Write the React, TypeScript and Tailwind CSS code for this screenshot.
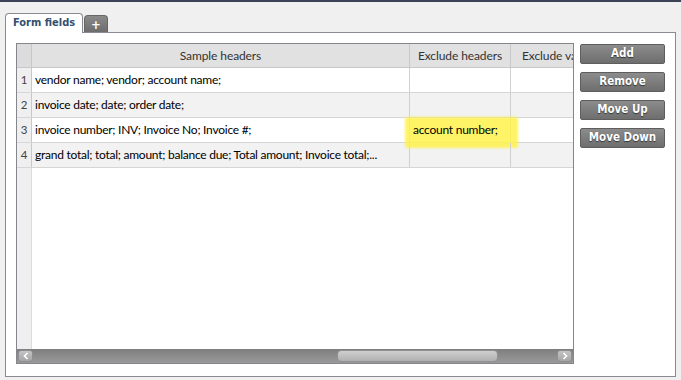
import React from "react";

const rows = [
  { n: 1, a: "vendor name; vendor; account name;", b: "" },
  { n: 2, a: "invoice date; date; order date;", b: "" },
  { n: 3, a: "invoice number; INV; Invoice No; Invoice #;", b: "account number;" },
  { n: 4, a: "grand total; total; amount; balance due; Total amount; Invoice total;...", b: "" },
];

const cellFont = { fontFamily: 'Lato, "Open Sans", sans-serif' };
const btnFont = { fontFamily: '"DejaVu Sans Condensed", "DejaVu Sans", sans-serif' };

function Btn({ label }: { label: string }) {
  return (
    <div
      className="w-[85px] h-[20px] rounded-[2px] border border-[#5e5e5e] bg-gradient-to-b from-[#8c8c8c] to-[#6e6e6e] flex items-center justify-center text-white font-bold text-[11.5px] [text-shadow:0_1px_1px_#333]"
      style={btnFont}
    >
      {label}
    </div>
  );
}

export default function App() {
  return (
    <div className="w-[681px] h-[380px] bg-[#f0f0f0] border-t-[2px] border-[#3d4356] flex flex-col overflow-hidden">
      <div className="flex items-end pl-[5px] pt-[10px]">
        <div
          className="h-[20px] w-[78px] bg-white border border-b-0 border-[#8a8a92] rounded-t-[4px] flex items-center pl-[7px] text-[11px] font-bold text-[#34506f] relative top-[1px]"
          style={btnFont}
        >
          Form fields
        </div>
        <div className="h-[17px] w-[24px] ml-[1px] bg-gradient-to-b from-[#8a8a8a] to-[#6d6d6d] border border-[#666] border-b-0 rounded-t-[4px] flex items-center justify-center text-white text-[13px] font-bold leading-none" style={btnFont}>
          +
        </div>
      </div>
      <div className="mx-[5px] h-[345px] bg-white border border-[#8a8a92] flex pl-[10px] pt-[10px] pr-[11px]">
        <div className="w-[558px] h-[321px] border border-[#85858c] flex flex-col relative" style={cellFont}>
          {/* header */}
          <div className="flex h-[24px] shrink-0 bg-[#e1e1e1] border-b border-[#c8c8c8] text-[12px] tracking-[-0.1px] text-[#333]">
            <div className="w-[15px] border-r border-[#c8c8c8] bg-[#dcdcdc]" />
            <div className="w-[378px] border-r border-[#c8c8c8] flex items-center justify-center">Sample headers</div>
            <div className="w-[101px] border-r border-[#c8c8c8] flex items-center justify-center">Exclude headers</div>
            <div className="flex-1 flex items-center pl-[11px] overflow-hidden whitespace-nowrap">Exclude values</div>
          </div>
          {rows.map((r, i) => (
            <div
              key={r.n}
              className={`flex h-[25px] shrink-0 border-b border-[#d6d6d6] text-[12px] tracking-[-0.25px] text-black ${i % 2 === 1 ? "bg-[#f2f2f2]" : "bg-white"}`}
            >
              <div className="w-[15px] border-r border-[#c8c8c8] bg-[#efefef] flex items-center justify-center text-[11.5px] tracking-normal text-[#444]">{r.n}</div>
              <div className="w-[378px] border-r border-[#d0d0d0] flex items-center pl-[3px] whitespace-nowrap overflow-hidden">{r.a}</div>
              <div className="w-[101px] border-r border-[#d0d0d0] flex items-center pl-[3px] whitespace-nowrap relative">
                {r.b && (
                  <>
                    <div className="absolute left-[-5px] top-[-1px] w-[113px] h-[31px] bg-[#fff24a]/85 rounded-[3px] blur-[1px]" />
                    <span className="relative">{r.b}</span>
                  </>
                )}
              </div>
              <div className="flex-1" />
            </div>
          ))}
          <div className="flex-1 flex">
            <div className="w-[15px] bg-[#efefef] border-r border-[#dcdcdc]" />
            <div className="flex-1 bg-white" />
          </div>
          {/* scrollbar */}
          <div className="h-[14px] shrink-0 bg-gradient-to-b from-[#7e7e7e] to-[#9a9a9a] flex items-center px-[1px]">
            <div className="w-[15px] h-[12px] rounded-[3px] bg-gradient-to-b from-[#c4c4c4] to-[#a6a6a6] border border-[#8e8e8e] flex items-center justify-center">
              <svg width="6" height="8" viewBox="0 0 6 8"><path d="M4.5 1 L1.5 4 L4.5 7" stroke="white" strokeWidth="1.6" fill="none" /></svg>
            </div>
            <div className="w-[304px]" />
            <div className="w-[161px] h-[12px] rounded-[4px] bg-gradient-to-b from-[#cfcfcf] to-[#b0b0b0] border border-[#909090]" />
            <div className="flex-1" />
            <div className="w-[15px] h-[12px] rounded-[3px] bg-gradient-to-b from-[#c4c4c4] to-[#a6a6a6] border border-[#8e8e8e] flex items-center justify-center">
              <svg width="6" height="8" viewBox="0 0 6 8"><path d="M1.5 1 L4.5 4 L1.5 7" stroke="white" strokeWidth="1.6" fill="none" /></svg>
            </div>
          </div>
        </div>
        <div className="ml-[6px] pt-[1px] flex flex-col gap-[8px]">
          <Btn label="Add" />
          <Btn label="Remove" />
          <Btn label="Move Up" />
          <Btn label="Move Down" />
        </div>
      </div>
    </div>
  );
}
